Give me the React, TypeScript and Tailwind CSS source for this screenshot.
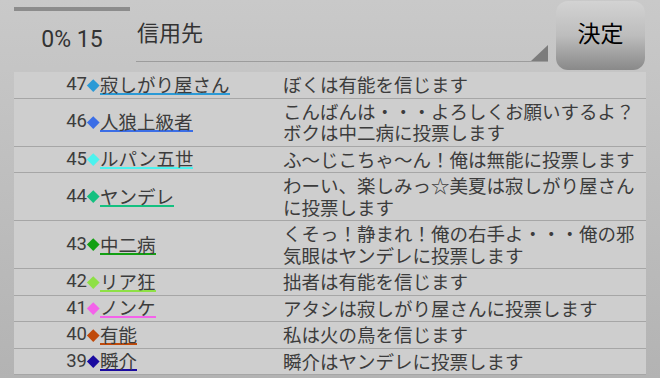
import React from 'react'

interface Vote {
  no: number
  name: string
  color: string
  text: string
}

const votes: Vote[] = [
  { no: 47, name: '寂しがり屋さん', color: '#2b9ad6', text: 'ぼくは有能を信じます' },
  { no: 46, name: '人狼上級者', color: '#3b6ee6', text: 'こんばんは・・・よろしくお願いするよ？ボクは中二病に投票します' },
  { no: 45, name: 'ルパン五世', color: '#4cf2ee', text: 'ふ～じこちゃ～ん！俺は無能に投票します' },
  { no: 44, name: 'ヤンデレ', color: '#14c080', text: 'わーい、楽しみっ☆美夏は寂しがり屋さんに投票します' },
  { no: 43, name: '中二病', color: '#12a012', text: 'くそっ！静まれ！俺の右手よ・・・俺の邪気眼はヤンデレに投票します' },
  { no: 42, name: 'リア狂', color: '#8ee046', text: '拙者は有能を信じます' },
  { no: 41, name: 'ノンケ', color: '#f462ea', text: 'アタシは寂しがり屋さんに投票します' },
  { no: 40, name: '有能', color: '#c04a0a', text: '私は火の鳥を信じます' },
  { no: 39, name: '瞬介', color: '#1a0aa0', text: '瞬介はヤンデレに投票します' },
]

function VoteRow({ vote }: { vote: Vote }) {
  return (
    <div className="flex items-center border-b border-[#a6a6a6] py-[2px]">
      <div className="w-[73px] shrink-0 text-right leading-[21.5px]" style={{ fontFamily: 'Roboto, sans-serif' }}>
        {vote.no}
      </div>
      <div className="flex w-[13px] shrink-0 items-center justify-center">
        <div className="h-[8.5px] w-[8.5px] rotate-45" style={{ backgroundColor: vote.color }} />
      </div>
      <div className="flex w-[183px] shrink-0">
        <span className="border-b-2 leading-[18px]" style={{ borderColor: vote.color }}>
          {vote.name}
        </span>
      </div>
      <div className="min-w-0 flex-1 pr-[6px] leading-[21.5px]">{vote.text}</div>
    </div>
  )
}

export default function App() {
  return (
    <div
      className="h-[378px] w-[660px] overflow-hidden bg-gradient-to-b from-[#c9c9c9] to-[#b3b3b3] text-[#3c3c3c]"
      style={{ fontFamily: 'Roboto, "Noto Sans CJK JP", sans-serif' }}
    >
      {/* header */}
      <div className="flex h-[72px] items-start pl-[14px]">
        <div className="w-[116px] shrink-0 pt-[7px]">
          <div className="h-[4px] bg-[#8c8c8c]" />
          <div className="mt-[15px] text-center text-[23px] leading-[28px] text-[#333]">0% 15</div>
        </div>
        <div className="relative ml-[6px] mt-[18px] h-[44px] w-[412px] shrink-0 border-b-[1.5px] border-[#9c9c9c]">
          <div className="pl-[1px] text-[22px] leading-[31px] text-[#333]">信用先</div>
          <svg className="absolute bottom-0 right-0" width="17" height="16" viewBox="0 0 17 16">
            <polygon points="17,0 17,16 0,16" fill="#7c7c7c" />
          </svg>
        </div>
        <button className="ml-[8px] mt-[1px] flex h-[69px] w-[89px] shrink-0 items-center justify-center rounded-[12px] bg-gradient-to-b from-[#d3d3d3] via-[#bdbdbd] to-[#898989] text-[23px] text-black">
          決定
        </button>
      </div>
      {/* vote list */}
      <div
        className="ml-[14px] w-[632px] bg-[#cecece] text-[18.5px]"
        style={{ fontFamily: '"Noto Sans CJK JP", sans-serif' }}
      >
        {votes.map((v) => (
          <VoteRow key={v.no} vote={v} />
        ))}
      </div>
    </div>
  )
}
